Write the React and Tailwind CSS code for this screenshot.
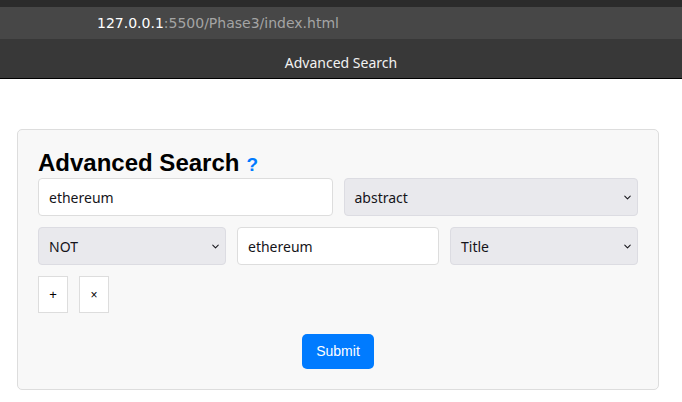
import { ChevronDown } from "lucide-react";

function Select({ value, className = "" }) {
  return (
    <div
      className={`flex h-[38px] items-center justify-between rounded-[4px] border border-[#dcdce2] bg-[#e9e9ed] pl-[10px] pr-[4px] text-[14px] text-[#15141a] ${className}`}
    >
      <span>{value}</span>
      <ChevronDown size={11} strokeWidth={2.2} className="text-[#15141a]" />
    </div>
  );
}

function TextBox({ value, className = "" }) {
  return (
    <div
      className={`flex h-[38px] items-center rounded-[4px] border border-[#dddddd] bg-white px-[10px] text-[14px] text-[#15141a] ${className}`}
    >
      {value}
    </div>
  );
}

export default function App() {
  return (
    <div className="h-[402px] w-[682px] overflow-hidden bg-white font-['Noto_Sans',sans-serif]">
      {/* browser chrome */}
      <div className="h-[7px] bg-[#2b2b2b]" />
      <div className="flex h-[32px] items-center bg-[#474747] pl-[97px] font-['DejaVu_Sans',sans-serif] text-[14px]">
        <span className="text-white">127.0.0.1</span>
        <span className="text-[#a4a4a4]">:5500/Phase3/index.html</span>
      </div>
      <div className="flex h-[40px] items-center justify-center border-b border-black bg-[#383838] pt-[7px] text-[14px] text-[#f2f2f2]">
        Advanced Search
      </div>

      {/* page */}
      <div className="ml-[17px] mt-[50px] w-[642px] rounded-[5px] border border-[#dddddd] bg-[#f8f8f8] p-[20px]">
        <h1 className="flex items-baseline font-['Liberation_Sans',sans-serif] text-[24px] font-bold leading-[26px] text-black">
          Advanced Search
          <span className="ml-[7px] text-[19px] text-[#007bff]">?</span>
        </h1>

        <div className="grid grid-cols-2 gap-[11px]">
          <TextBox value="ethereum" />
          <Select value="abstract" />
        </div>

        <div className="mt-[11px] grid grid-cols-[188px_1fr_188px] gap-[11px]">
          <Select value="NOT" />
          <TextBox value="ethereum" />
          <Select value="Title" />
        </div>

        <div className="mt-[11px] flex gap-[11px]">
          <button className="flex h-[37px] w-[30px] items-center justify-center border border-[#dddddd] bg-white font-['Liberation_Sans',sans-serif] text-[13px] text-black">
            +
          </button>
          <button className="flex h-[37px] w-[30px] items-center justify-center border border-[#dddddd] bg-white font-['Liberation_Sans',sans-serif] text-[12px] text-black">
            ×
          </button>
        </div>

        <div className="mt-[21px] flex justify-center">
          <button className="h-[35px] w-[72px] rounded-[5px] bg-[#007bff] font-['Liberation_Sans',sans-serif] text-[14px] text-white">
            Submit
          </button>
        </div>
      </div>
    </div>
  );
}
